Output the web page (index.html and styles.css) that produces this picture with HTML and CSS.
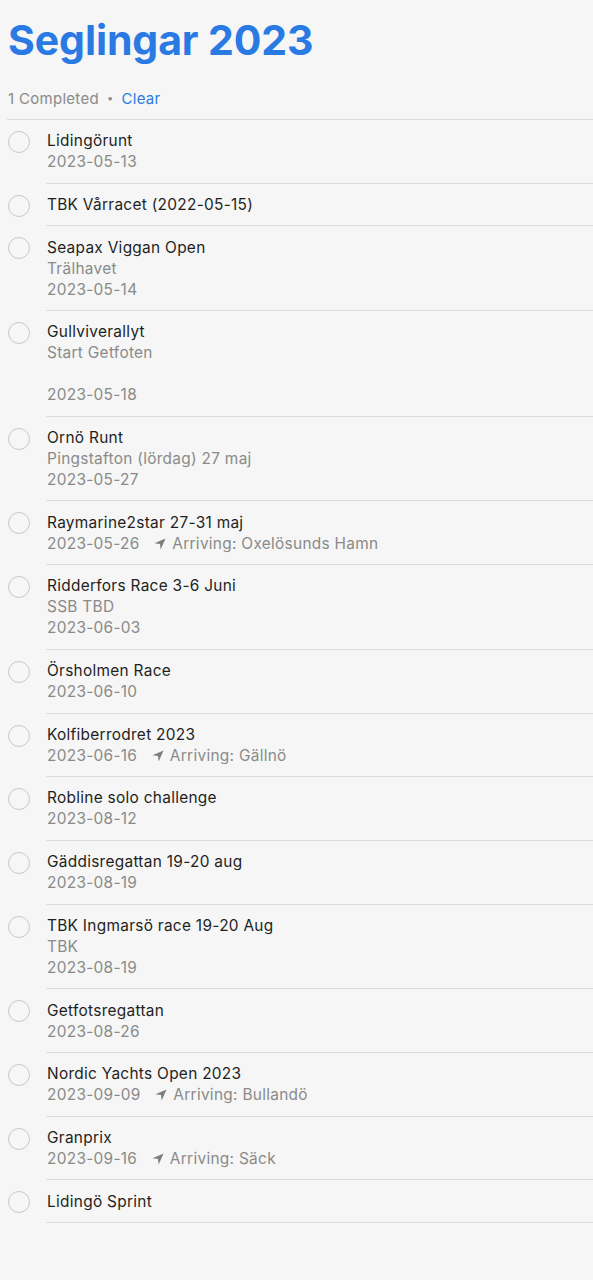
FILE: index.html
```html
<!DOCTYPE html>
<html>
  <head>
    <title>Seglingar 2023</title>
    <link rel="stylesheet" href="styles.css">
  </head>
  <body>
    <div class="list">
      <h1 class="title">Seglingar 2023</h1>
      <div class="summary">
        <span>1 Completed</span>
        <span class="dot">•</span>
        <a class="clear" href="#">Clear</a>
      </div>

      <ul class="items">
        <li class="item">
          <span class="check"></span>
          <div class="body">
            <div class="name">Lidingörunt</div>
            <div class="sub">2023-05-13</div>
          </div>
        </li>
        <li class="item">
          <span class="check"></span>
          <div class="body">
            <div class="name">TBK Vårracet (2022-05-15)</div>
          </div>
        </li>
        <li class="item">
          <span class="check"></span>
          <div class="body">
            <div class="name">Seapax Viggan Open</div>
            <div class="sub">Trälhavet</div>
            <div class="sub">2023-05-14</div>
          </div>
        </li>
        <li class="item">
          <span class="check"></span>
          <div class="body">
            <div class="name">Gullviverallyt</div>
            <div class="sub">Start Getfoten</div>
            <div class="sub">&nbsp;</div>
            <div class="sub">2023-05-18</div>
          </div>
        </li>
        <li class="item">
          <span class="check"></span>
          <div class="body">
            <div class="name">Ornö Runt</div>
            <div class="sub">Pingstafton (lördag) 27 maj</div>
            <div class="sub">2023-05-27</div>
          </div>
        </li>
        <li class="item">
          <span class="check"></span>
          <div class="body">
            <div class="name">Raymarine2star 27-31 maj</div>
            <div class="sub">2023-05-26 <span class="loc"><svg class="arrow" viewBox="0 0 12 12"><path d="M11.5 0.5 L0.5 5.3 L6 6 L6.7 11.5 Z"/></svg>Arriving: Oxelösunds Hamn</span></div>
          </div>
        </li>
        <li class="item">
          <span class="check"></span>
          <div class="body">
            <div class="name">Ridderfors Race 3-6 Juni</div>
            <div class="sub">SSB TBD</div>
            <div class="sub">2023-06-03</div>
          </div>
        </li>
        <li class="item">
          <span class="check"></span>
          <div class="body">
            <div class="name">Örsholmen Race</div>
            <div class="sub">2023-06-10</div>
          </div>
        </li>
        <li class="item">
          <span class="check"></span>
          <div class="body">
            <div class="name">Kolfiberrodret 2023</div>
            <div class="sub">2023-06-16 <span class="loc"><svg class="arrow" viewBox="0 0 12 12"><path d="M11.5 0.5 L0.5 5.3 L6 6 L6.7 11.5 Z"/></svg>Arriving: Gällnö</span></div>
          </div>
        </li>
        <li class="item">
          <span class="check"></span>
          <div class="body">
            <div class="name">Robline solo challenge</div>
            <div class="sub">2023-08-12</div>
          </div>
        </li>
        <li class="item">
          <span class="check"></span>
          <div class="body">
            <div class="name">Gäddisregattan 19-20 aug</div>
            <div class="sub">2023-08-19</div>
          </div>
        </li>
        <li class="item">
          <span class="check"></span>
          <div class="body">
            <div class="name">TBK Ingmarsö race 19-20 Aug</div>
            <div class="sub">TBK</div>
            <div class="sub">2023-08-19</div>
          </div>
        </li>
        <li class="item">
          <span class="check"></span>
          <div class="body">
            <div class="name">Getfotsregattan</div>
            <div class="sub">2023-08-26</div>
          </div>
        </li>
        <li class="item">
          <span class="check"></span>
          <div class="body">
            <div class="name">Nordic Yachts Open 2023</div>
            <div class="sub">2023-09-09 <span class="loc"><svg class="arrow" viewBox="0 0 12 12"><path d="M11.5 0.5 L0.5 5.3 L6 6 L6.7 11.5 Z"/></svg>Arriving: Bullandö</span></div>
          </div>
        </li>
        <li class="item">
          <span class="check"></span>
          <div class="body">
            <div class="name">Granprix</div>
            <div class="sub">2023-09-16 <span class="loc"><svg class="arrow" viewBox="0 0 12 12"><path d="M11.5 0.5 L0.5 5.3 L6 6 L6.7 11.5 Z"/></svg>Arriving: Säck</span></div>
          </div>
        </li>
        <li class="item">
          <span class="check"></span>
          <div class="body">
            <div class="name">Lidingö Sprint</div>
          </div>
        </li>
      </ul>
    </div>
  </body>
</html>
```

FILE: styles.css
```css
body { margin: 0; background: #f5f6f5; font-family: Inter, "Noto Sans", sans-serif; color: #1f1f1f; }

.list { padding: 16px 0 0 7px; }
.title { margin: 0; font-size: 41px; line-height: 48px; font-weight: 700; color: #2a7ae4; letter-spacing: -0.1px; padding-left: 1px; }

.summary { display: flex; align-items: center; gap: 8px; margin-top: 24px; padding: 0 0 10px 1px; font-size: 15px; line-height: 21px; letter-spacing: 0.3px; color: #8a8a8a; border-bottom: 1px solid #dcdcdc; }
.dot { font-size: 11px; }
.clear { color: #2a7ae4; text-decoration: none; }

.items { list-style: none; margin: 0; padding: 0; }
.item { display: flex; align-items: flex-start; }
.check { flex: none; width: 20px; height: 20px; margin: 11px 16px 0 1px; border: 1.5px solid #c8c8c8; border-radius: 50%; }
.body { flex: 1; padding: 10.3px 0 10.4px 1px; border-bottom: 1px solid #dcdcdc; font-size: 15.4px; line-height: 21px; letter-spacing: 0.3px; }
.name { color: #1f1f1f; }
.sub { color: #8a8a8a; }
.loc { margin-left: 10px; }
.arrow { width: 12px; height: 12px; margin-right: 6px; fill: #7e7e7e; vertical-align: -1px; }
```
